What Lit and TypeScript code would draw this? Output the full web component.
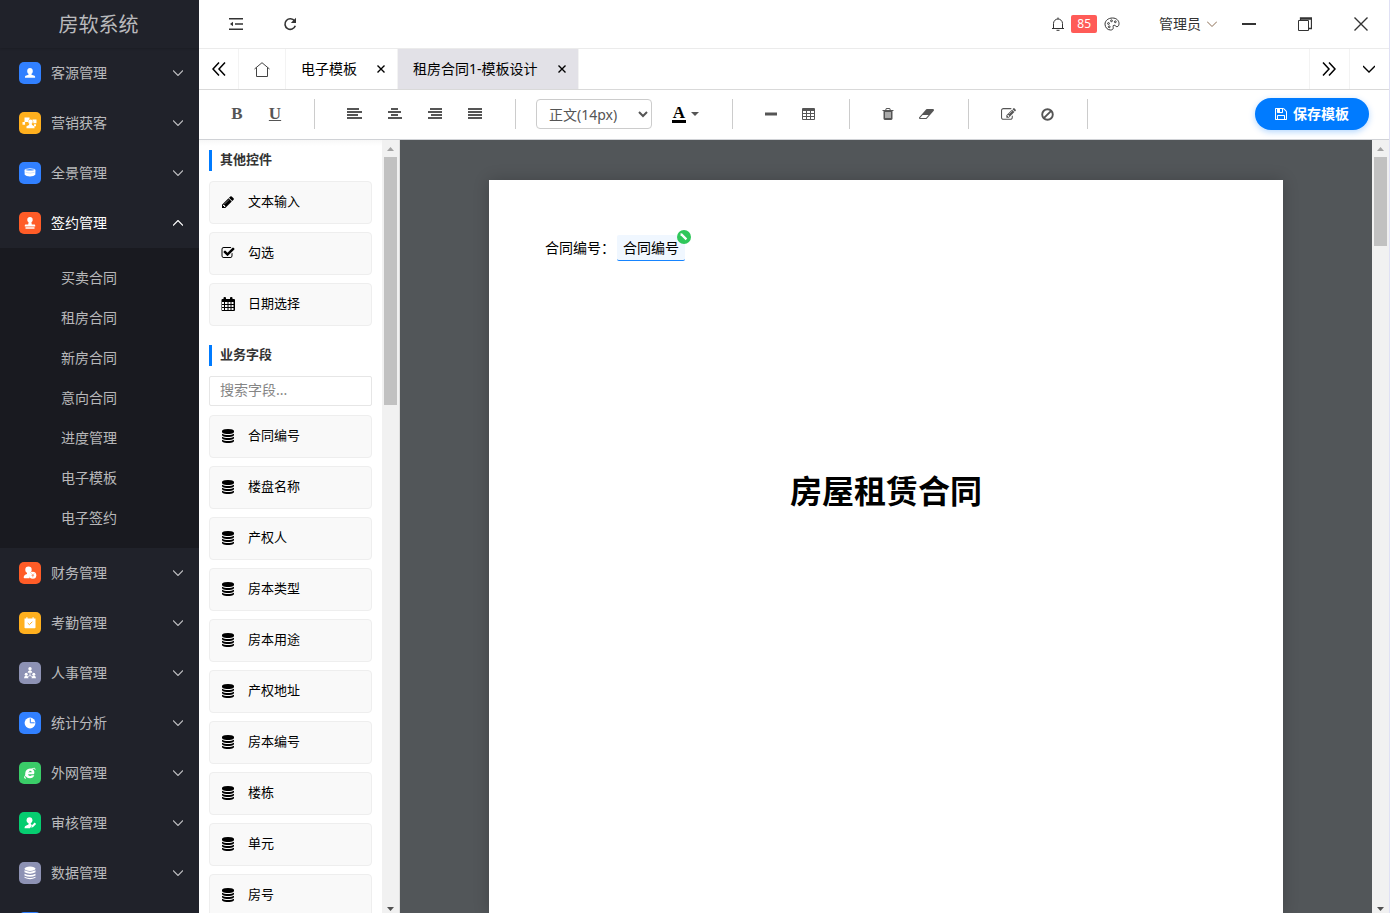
import { LitElement, html, css, svg, nothing } from "lit";
import { customElement, property, state } from "lit/decorators.js";
import { classMap } from "lit/directives/class-map.js";

const FA: Record<string, string> = {
  trash:
    "M704 1376v-704q0-14-9-23t-23-9h-64q-14 0-23 9t-9 23v704q0 14 9 23t23 9h64q14 0 23-9t9-23zm256 0v-704q0-14-9-23t-23-9h-64q-14 0-23 9t-9 23v704q0 14 9 23t23 9h64q14 0 23-9t9-23zm256 0v-704q0-14-9-23t-23-9h-64q-14 0-23 9t-9 23v704q0 14 9 23t23 9h64q14 0 23-9t9-23zm-544-992h448l-48-117q-7-9-17-11h-317q-10 2-17 11zm928 32v64q0 14-9 23t-23 9h-96v948q0 83-47 143.5t-113 60.5h-832q-66 0-113-58.5t-47-141.5v-952h-96q-14 0-23-9t-9-23v-64q0-14 9-23t23-9h309l70-167q15-37 54-63t79-26h320q40 0 79 26t54 63l70 167h309q14 0 23 9t9 23z",
  pencil:
    "M491 1536l91-91-235-235-91 91v107h128v128h107zm523-928q0-22-22-22-10 0-17 7l-542 542q-7 7-7 17 0 22 22 22 10 0 17-7l542-542q7-7 7-17zm-54-192l416 416-832 832h-416v-416zm683 96q0 53-37 90l-166 166-416-416 166-165q36-38 90-38 53 0 91 38l235 234q37 39 37 91z",
  check:
    "M1472 930v318q0 119-84.5 203.5t-203.5 84.5h-832q-119 0-203.5-84.5t-84.5-203.5v-832q0-119 84.5-203.5t203.5-84.5h832q63 0 117 25 15 7 18 23 3 17-9 29l-49 49q-10 10-23 10-3 0-9-2-23-6-45-6h-832q-66 0-113 47t-47 113v832q0 66 47 113t113 47h832q66 0 113-47t47-113v-254q0-13 9-22l64-64q10-10 23-10 6 0 12 3 20 8 20 29zm231-489l-814 814q-24 24-57 24t-57-24l-430-430q-24-24-24-57t24-57l110-110q24-24 57-24t57 24l263 263 647-647q24-24 57-24t57 24l110 110q24 24 24 57t-24 57z",
  edit:
    "M888 1184l116-116-152-152-116 116v56h96v96h56zm440-720q-16-16-33 1l-350 350q-17 17-1 33t33-1l350-350q17-17 1-33zm80 594v190q0 119-84.5 203.5t-203.5 84.5h-832q-119 0-203.5-84.5t-84.5-203.5v-832q0-119 84.5-203.5t203.5-84.5h832q63 0 117 25 15 7 18 23 3 17-9 29l-49 49q-14 14-32 8-23-6-45-6h-832q-66 0-113 47t-47 113v832q0 66 47 113t113 47h832q66 0 113-47t47-113v-126q0-13 9-22l64-64q15-15 35-7t20 29zm-96-738l288 288-672 672h-288v-288zm444 132l-92 92-288-288 92-92q28-28 68-28t68 28l152 152q28 28 28 68t-28 68z",
  save:
    "M512 1536h768v-384h-768v384zm896 0h128v-896q0-14-10-38.5t-20-34.5l-281-281q-10-10-34-20t-39-10v416q0 40-28 68t-68 28h-576q-40 0-68-28t-28-68v-416h-128v1280h128v-416q0-40 28-68t68-28h832q40 0 68 28t28 68v416zm-384-928v-320q0-13-9.5-22.5t-22.5-9.5h-192q-13 0-22.5 9.5t-9.5 22.5v320q0 13 9.5 22.5t22.5 9.5h192q13 0 22.5-9.5t9.5-22.5zm640 32v928q0 40-28 68t-68 28h-1344q-40 0-68-28t-28-68v-1344q0-40 28-68t68-28h928q40 0 88 20t76 48l280 280q28 28 48 76t20 88z",
  database:
    "M896 768q237 0 443-43t325-127v170q0 69-103 128t-280 93.5-385 34.5-385-34.5-280-93.5-103-128v-170q119 84 325 127t443 43zm0 768q237 0 443-43t325-127v170q0 69-103 128t-280 93.5-385 34.5-385-34.5-280-93.5-103-128v-170q119 84 325 127t443 43zm0-384q237 0 443-43t325-127v170q0 69-103 128t-280 93.5-385 34.5-385-34.5-280-93.5-103-128v-170q119 84 325 127t443 43zm0-1152q208 0 385 34.5t280 93.5 103 128v128q0 69-103 128t-280 93.5-385 34.5-385-34.5-280-93.5-103-128v-128q0-69 103-128t280-93.5 385-34.5z",
};

const fa = (name: string, size = 14) =>
  html`<svg width=${size} height=${size} viewBox="0 0 1792 1792" fill="currentColor" aria-hidden="true"><path d=${FA[name]} /></svg>`;

const line = (w: number, h: number, d: string, sw = 1) =>
  html`<svg width=${w} height=${h} viewBox="0 0 ${w} ${h}" fill="none" stroke="currentColor" stroke-width=${sw} aria-hidden="true"><path d=${d} /></svg>`;

const bars = (rows: number[][]) =>
  html`<svg width="16" height="12" viewBox="0 0 16 12" fill="currentColor" aria-hidden="true">
    ${rows.map(([x, w], i) => svg`<rect x=${x} y=${i * 3} width=${w} height="2" />`)}
  </svg>`;

const tableIcon = html`<svg width="16" height="14" viewBox="0 0 16 14" aria-hidden="true">
  <path fill="currentColor" fill-rule="evenodd" d="M2 1h11q1 0 1 1v10q0 1-1 1h-11q-1 0-1-1v-10q0-1 1-1zM2 4v2h3v-2zM6 4v2h3v-2zM10 4v2h3v-2zM2 7v2h3v-2zM6 7v2h3v-2zM10 7v2h3v-2zM2 10v2h3v-2zM6 10v2h3v-2zM10 10v2h3v-2z" />
</svg>`;

const calendarIcon = html`<svg width="14" height="14" viewBox="0 0 14 14" aria-hidden="true">
  <path fill="currentColor" fill-rule="evenodd" d="M1 2h1.500v-1q0-1 1-1h.5q1 0 1 1v1h4v-1q0-1 1-1h.5q1 0 1 1v1h1.500q1 0 1 1v10q0 1-1 1h-11.500q-1 0-1-1v-10q0-1 1-1zM1 5v2h2v-2zM4 5v2h2.500v-2zM7.500 5v2h2v-2zM10.500 5v2h2v-2zM1 8v2h2v-2zM4 8v2h2.500v-2zM7.500 8v2h2v-2zM10.500 8v2h2v-2zM1 11v2h2v-2zM4 11v2h2.500v-2zM7.500 11v2h2v-2zM10.500 11v2h2v-2z" />
</svg>`;

const toolIcon = (kind: string) => {
  switch (kind) {
    case "text":
      return fa("pencil");
    case "check":
      return fa("check");
    case "date":
      return calendarIcon;
    default:
      return fa("database");
  }
};

const badgeShapes: Record<string, unknown> = {
  user: svg`<path d="M11 6c1.700 0 2.800 1.200 2.800 2.900 0 1.300-.5 2.300-1.300 2.900v.9l3 1c.4.200.6.600.6 1v1H6v-1c0-.4.2-.8.600-1l2.900-1v-.9C8.700 11.200 8.200 10.200 8.200 8.900c0-1.700 1.100-2.900 2.800-2.900z" />`,
  market: svg`<path d="M5.500 5.500h5v1.800q-1.500.7-1.400 2.700H5.500zM13.500 7.500h4v3.800h-3.200q.5-2-.8-3zM3.500 10h2.600v2.800H3.500zM15 12.300h2v2h-2z" /><circle cx="11.500" cy="9.800" r="2.300" /><path d="M10.300 11.500h2.400l.3 1.500 2.500 1.300v2h-8v-2l2.500-1.300z" />`,
  pano: svg`<path d="M5.500 7.500q1 1 5.500 1t5.500-1l-.2 5.300q-1.300 1.700-5.300 1.700t-5.300-1.700z" /><path d="M6 7.500q5-1.800 10 0" stroke="#fff" stroke-width=".8" fill="none" /><path d="M6.500 10.300q4.500 1.600 9 0" stroke="#9cc2ff" stroke-width=".5" fill="none" />`,
  stamp: svg`<circle cx="11" cy="7.800" r="2.700" /><path d="M9.800 9h2.400l.6 3.500h2.700q.7 0 .7.700v1.300H5.800v-1.300q0-.7.700-.7h2.700zM6.500 15.300h9v1.500h-9z" />`,
  finance: svg`<circle cx="9.500" cy="7.700" r="3.200" /><path d="M8 10h3l.5 1.500-1 4.800H5.500q-.8 0-.8-.8c0-2 1.300-2.900 3.300-3.500z" /><circle cx="13.800" cy="13.200" r="3.500" /><path d="M12.500 11.500l1.300 1.500 1.300-1.500M13.800 13v2.300M12.500 13.500h2.600" stroke="#ff8a65" stroke-width=".7" fill="none" />`,
  clock: svg`<path d="M5.500 6.500h11v9q0 .8-.8.800H6.300q-.8 0-.8-.8zM7.300 5.200h1.200v2H7.300zM13.500 5.200h1.200v2h-1.200z" /><path d="M8.700 11l1.700 1.700 3-3" stroke="#ffb01e" stroke-width="1" fill="none" />`,
  team: svg`<circle cx="11" cy="6.800" r="1.700" /><path d="M8.600 10.800q.2-2.500 2.400-2.500t2.400 2.500z" /><circle cx="7.200" cy="12.300" r="1.500" /><path d="M5 16.200q.2-2.600 2.200-2.600t2.300 2.600z" /><circle cx="14.800" cy="12.300" r="1.500" /><path d="M12.500 16.200q.2-2.600 2.300-2.600t2.200 2.600z" /><path d="M11 10.500v3l-2 1M11 13.500l2 1" stroke="#fff" stroke-width=".8" fill="none" />`,
  chart: svg`<circle cx="11" cy="11" r="5.400" /><path d="M11.300 6.500v4.300h4.300" stroke="#2f80ff" stroke-width="1" fill="none" />`,
  web: svg`<path d="M14.800 12.300H9q.3 1.800 2 1.800 1.200 0 1.800-.8h2.500q-1 2.900-4.400 2.900-4.600 0-4.700-4.700Q6.500 7 11 6.600q4.500.1 4.400 4.500zM9.100 10.200h3.700q-.2-1.600-1.800-1.600t-1.900 1.600z" /><path d="M7 16.200q-2 .5-1.300-1.500 1.500-4.500 7-7.600 3.800-1.800 3.400.6" stroke="#fff" stroke-width="1" fill="none" />`,
  audit: svg`<circle cx="10.500" cy="8.200" r="2.900" /><path d="M9.500 10h2l.5 2.200 1 .8-2 3.300H5.600v-.9q0-1.500 1.700-2l2.200-1z" /><path d="M12.300 15.800l.4-2.200 3-3 1.400 1.400-3 3z" />`,
  data: svg`<ellipse cx="11" cy="6.700" rx="5.500" ry="2.200" /><path d="M5.500 8.300q5.500 2.800 11 0v2q-5.500 2.800-11 0zM5.500 11.700q5.500 2.600 11 0v1.700q-5.500 2.800-11 0zM5.500 14.800q5.500 2.600 11 0v1q-5.500 2.700-11 0z" />`,
};

interface Menu {
  name: string;
  icon: string;
  color: string;
  children?: string[];
}

const MENUS: Menu[] = [
  { name: "客源管理", icon: "user", color: "blue" },
  { name: "营销获客", icon: "market", color: "amber" },
  { name: "全景管理", icon: "pano", color: "blue" },
  {
    name: "签约管理",
    icon: "stamp",
    color: "orange",
    children: ["买卖合同", "租房合同", "新房合同", "意向合同", "进度管理", "电子模板", "电子签约"],
  },
  { name: "财务管理", icon: "finance", color: "orange" },
  { name: "考勤管理", icon: "clock", color: "amber" },
  { name: "人事管理", icon: "team", color: "slate" },
  { name: "统计分析", icon: "chart", color: "blue" },
  { name: "外网管理", icon: "web", color: "green" },
  { name: "审核管理", icon: "audit", color: "emerald" },
  { name: "数据管理", icon: "data", color: "slate" },
  { name: "", icon: "user", color: "blue" },
];

const base = css`
  * {
    box-sizing: border-box;
  }
  button {
    font: inherit;
    color: inherit;
    background: none;
    border: 0;
    padding: 0;
    cursor: pointer;
  }
  a {
    color: inherit;
    text-decoration: none;
  }
  svg {
    display: block;
    flex: none;
  }
`;

@customElement("side-menu")
export class SideMenu extends LitElement {
  @state() private open: string | null = "签约管理";

  static styles = [
    base,
    css`
      :host {
        display: flex;
        flex-direction: column;
        width: 199px;
        flex: none;
        overflow: hidden;
        background: #20222a;
        color: rgba(255, 255, 255, 0.7);
      }
      .logo {
        flex: none;
        height: 48px;
        line-height: 50px;
        padding-right: 2px;
        text-align: center;
        font-size: 20px;
        box-shadow: 0 1px 2px rgba(0, 0, 0, 0.15);
      }
      nav {
        flex: none;
      }
      .item {
        display: flex;
        align-items: center;
        width: 100%;
        height: 50px;
        padding: 0 16px 0 19px;
        gap: 10px;
        text-align: left;
      }
      .item span {
        flex: 1;
      }
      .item.open {
        color: #fff;
      }
      .badge {
        border-radius: 5px;
      }
      .blue {
        background: #3180ff;
      }
      .amber {
        background: #ffb01e;
      }
      .orange {
        background: #ff5c27;
      }
      .slate {
        background: #8d92b4;
      }
      .green {
        background: #3acd68;
      }
      .emerald {
        background: #06cd70;
      }
      .sub {
        padding: 10px 0;
        background: #191a20;
      }
      .sub a {
        display: block;
        height: 40px;
        line-height: 40px;
        padding-left: 61px;
      }
    `,
  ];

  render() {
    return html`
      <div class="logo">房软系统</div>
      <nav>
        ${MENUS.map((m) => {
          const open = m.name === this.open;
          return html`
            <button
              class=${classMap({ item: true, open })}
              aria-expanded=${open}
              @click=${() => (this.open = open ? null : m.name)}
            >
              <svg class="badge ${m.color}" width="22" height="22" viewBox="0 0 22 22" fill="#fff" aria-hidden="true">
                ${badgeShapes[m.icon]}
              </svg>
              <span>${m.name}</span>
              ${line(10, 6, open ? "M0 5.500l5-5 5 5" : "M0 .5l5 5 5-5", 1.2)}
            </button>
            ${open && m.children
              ? html`<div class="sub">${m.children.map((c) => html`<a href="#">${c}</a>`)}</div>`
              : nothing}
          `;
        })}
      </nav>
    `;
  }
}

@customElement("scroll-rail")
export class ScrollRail extends LitElement {
  @property({ type: Number }) thumb = 100;

  static styles = css`
    :host {
      display: flex;
      flex-direction: column;
      flex: none;
      width: 17px;
      height: 100%;
      box-sizing: border-box;
      padding: 0 2px;
      background: #f1f1f1;
    }
    svg {
      display: block;
      flex: none;
      fill: #505050;
    }
    .up {
      fill: #a3a3a3;
    }
    .track {
      flex: 1;
    }
    .thumb {
      background: #c1c1c1;
    }
  `;

  render() {
    return html`
      <svg class="up" width="13" height="17" viewBox="0 0 13 17" aria-hidden="true"><path d="M3 11l3.500-4 3.500 4z" /></svg>
      <div class="track"><div class="thumb" style="height:${this.thumb}px"></div></div>
      <svg width="13" height="9" viewBox="0 0 13 9" aria-hidden="true"><path d="M3 3h7l-3.500 4z" /></svg>
    `;
  }
}

@customElement("tool-card")
export class ToolCard extends LitElement {
  @property() kind = "field";
  @property() label = "";

  static styles = [
    base,
    css`
      :host {
        display: block;
      }
      button {
        display: flex;
        align-items: center;
        gap: 13px;
        width: 100%;
        padding: 9px 11px 11px;
        border: 1px solid #eee;
        border-radius: 4px;
        background: #f9f9f9;
        color: #000;
        font-size: 13px;
        line-height: 21px;
      }
    `,
  ];

  render() {
    return html`<button>${toolIcon(this.kind)}<span>${this.label}</span></button>`;
  }
}

@customElement("app-root")
export class AppRoot extends LitElement {
  @state() private query = "";

  private fields = ["合同编号", "楼盘名称", "产权人", "房本类型", "房本用途", "产权地址", "房本编号", "楼栋", "单元", "房号"];

  static styles = [
    base,
    css`
      :host {
        display: flex;
        height: 100vh;
        overflow: hidden;
        background: #fff;
        color: #333;
        font: 14px/20px "Noto Sans", "Noto Sans CJK SC", sans-serif;
      }
      .shell {
        flex: 1;
        min-width: 0;
        display: flex;
        flex-direction: column;
        border-right: 1px solid #dfe0f5;
      }
      .header {
        flex: none;
        display: flex;
        align-items: center;
        justify-content: space-between;
        height: 49px;
        padding-left: 10px;
        border-bottom: 1px solid #ebebeb;
      }
      .header div {
        display: flex;
        align-items: center;
      }
      .icon-btn {
        display: flex;
        align-items: center;
        justify-content: center;
        width: 54px;
        height: 48px;
      }
      .win {
        width: 56px;
      }
      .notice {
        gap: 6px;
      }
      .count {
        padding: 0 6px;
        margin-right: 1px;
        border-radius: 2px;
        background: #ff5b57;
        color: #fff;
        font-size: 12px;
        line-height: 18px;
      }
      .account {
        display: flex;
        align-items: center;
        gap: 6px;
        padding: 0 4px 0 39px;
      }
      .account svg {
        color: #8a6d52;
      }
      .tabs {
        flex: none;
        display: flex;
        height: 41px;
        border-bottom: 1px solid #d9d9d9;
        color: #000;
      }
      .nav-btn {
        display: flex;
        align-items: center;
        justify-content: center;
        width: 40px;
        border-right: 1px solid #f3f3f3;
      }
      .home {
        width: 47px;
        color: #444;
      }
      .nav-btn.right {
        padding-right: 2px;
        border-right: 0;
        border-left: 1px solid #f3f3f3;
      }
      .tab {
        display: flex;
        align-items: center;
        gap: 16px;
        padding: 0 8px 0 15px;
        border-right: 1px solid #f3f3f3;
        white-space: nowrap;
      }
      .tab.active {
        background: #e2e1e7;
      }
      .tab button {
        display: flex;
        align-items: center;
        justify-content: center;
        width: 16px;
        height: 16px;
      }
      .spacer {
        flex: 1;
      }
      .toolbar {
        flex: none;
        display: flex;
        align-items: center;
        height: 50px;
        padding: 0 20px 1px 0;
        border-bottom: 1px solid #d0d2d6;
        color: #555;
      }
      .group {
        display: flex;
        align-items: center;
        height: 30px;
        padding: 0 20px;
        border-right: 1px solid #ccc;
      }
      .group.first {
        padding-left: 19px;
      }
      .tool {
        display: flex;
        align-items: center;
        justify-content: center;
        height: 30px;
        padding: 0 12px;
      }
      .serif {
        width: 38px;
        padding: 0;
        font: bold 17px/20px "Liberation Serif", serif;
      }
      .under {
        text-decoration: underline;
      }
      select {
        width: 116px;
        height: 30px;
        padding: 0 8px;
        border: 1px solid #ccc;
        border-radius: 4px;
        background: #fff;
        color: #555;
        font: inherit;
      }
      .color {
        gap: 5px;
        padding: 0 13px 0 20px;
        color: #000;
      }
      .letter {
        width: 14px;
        border-bottom: 3px solid #000;
        font: bold 17px/14px "Liberation Serif", serif;
      }
      .caret {
        color: #555;
      }
      .save {
        display: flex;
        align-items: center;
        gap: 5px;
        height: 32px;
        padding: 0 20px 0 19px;
        border-radius: 16px;
        background: #007bff;
        box-shadow: 0 2px 6px rgba(0, 123, 255, 0.3);
        color: #fff;
        font-weight: 700;
      }
      .work {
        flex: 1;
        min-height: 0;
        display: flex;
      }
      .panel {
        flex: none;
        display: flex;
        width: 201px;
        border-right: 1px solid #ddd;
        background: linear-gradient(#f7f7f7, #fff 6px);
      }
      .list {
        flex: 1;
        overflow: hidden;
        display: flex;
        flex-direction: column;
        gap: 8px;
        padding: 10px 10px 0;
      }
      .list > * {
        flex: none;
      }
      h3 {
        margin: 0 0 2px;
        padding: 0 0 3px 8px;
        border-left: 3px solid #007bff;
        font-size: 13px;
        line-height: 18px;
        font-weight: 700;
        color: #333;
      }
      h3.second {
        margin-top: 11px;
      }
      .search {
        height: 30px;
        width: 100%;
        margin-bottom: 1px;
        padding: 0 10px 3px;
        border: 1px solid #e6e6e6;
        border-radius: 2px;
        font: inherit;
        color: #333;
      }
      .search::placeholder {
        color: #858585;
      }
      .stage {
        flex: 1;
        min-width: 0;
        display: flex;
        background: #525659;
      }
      .canvas {
        flex: 1;
        min-width: 0;
        overflow: hidden;
        display: flex;
        justify-content: center;
        padding-top: 40px;
      }
      .paper {
        width: 794px;
        min-height: 100%;
        padding: 55px 56px;
        background: #fff;
        color: #000;
        box-shadow: 0 0 15px rgba(0, 0, 0, 0.2);
      }
      .row {
        display: flex;
        align-items: center;
        gap: 2px;
      }
      .field {
        position: relative;
        padding: 3px 6px 2px;
        border-bottom: 1px solid #1684ff;
        border-radius: 2px;
        background: #f0f7ff;
        line-height: 20px;
      }
      .mark {
        position: absolute;
        top: -5px;
        right: -6px;
      }
      h1 {
        margin: 206px 0 0;
        text-align: center;
        font-size: 32px;
        line-height: 48px;
        font-weight: 700;
      }
    `,
  ];

  private tool(label: string, icon: unknown) {
    return html`<button class="tool" aria-label=${label}>${icon}</button>`;
  }

  render() {
    return html`
      <side-menu></side-menu>
      <div class="shell">
        <header class="header">
          <div>
            <button class="icon-btn" aria-label="收起菜单">
              <svg width="14" height="12" viewBox="0 0 14 12" fill="none" stroke="currentColor" stroke-width="1.500" aria-hidden="true">
                <path d="M0 .8h14M6 6h8M0 11.200h14" /><path d="M4 3.800v4.400L1 6z" fill="currentColor" stroke="none" />
              </svg>
            </button>
            <button class="icon-btn" aria-label="刷新">
              <svg width="14" height="14" viewBox="0 0 14 14" fill="none" stroke="currentColor" stroke-width="1.600" aria-hidden="true">
                <path d="M11.600 4A5.300 5.300 0 1 0 12.300 8.800" /><path d="M13 .8v5.200H7.800z" fill="currentColor" stroke="none" />
              </svg>
            </button>
          </div>
          <div>
            <div class="notice">
              <svg width="14" height="14" viewBox="0 0 14 14" fill="none" stroke="currentColor" aria-hidden="true">
                <path d="M1 11.500h12M2.500 11.500V6.500a4.500 4.500 0 0 1 9 0v5M7 2V.5M5.500 13.300h3" />
              </svg>
              <span class="count">85</span>
              <svg width="16" height="14" viewBox="0 0 16 14" fill="none" stroke="currentColor" aria-hidden="true">
                <path d="M8.500 1C12.500 1 15 3.600 15 6.500c0 1.500-.6 3.200-2 3.200s-1.500-1.700-3-1.500c-1.600.3-.5 1.900-.8 3.200C8.900 12.500 8 13 6.500 13 3.500 13 1 10.400 1 7.200 1 3.600 4.300 1 8.500 1z" />
                <circle cx="4.500" cy="6.500" r=".9" /><circle cx="7.500" cy="3.800" r=".9" /><circle cx="11.300" cy="4.800" r=".9" /><circle cx="5.200" cy="9.800" r=".9" />
              </svg>
            </div>
            <button class="account">管理员 ${line(10, 6, "M0 .5l5 5 5-5")}</button>
            <button class="icon-btn win" aria-label="最小化">${line(14, 14, "M0 7h14", 2)}</button>
            <button class="icon-btn win" aria-label="还原">
              <svg width="14" height="14" viewBox="0 0 14 14" fill="none" stroke="currentColor" aria-hidden="true">
                <path d="M.5 3.500h10v10h-10z" /><path d="M2.500 3V1h11v10.500h-2.500M3 2h10" stroke-width="1.300" />
              </svg>
            </button>
            <button class="icon-btn win" aria-label="关闭">${line(14, 14, "M.5 .5l13 13M13.500 .5l-13 13", 1.4)}</button>
          </div>
        </header>

        <div class="tabs">
          <button class="nav-btn" aria-label="向左">${line(14, 14, "M7 .5L1 7l6 6.500M13 .5L7 7l6 6.500", 1.5)}</button>
          <button class="nav-btn home" aria-label="首页">
            ${line(16, 15, "M.5 7L8 .7 15.500 7M2.500 5.500v9h11v-9")}
          </button>
          <div class="tab">电子模板<button aria-label="关闭">${line(8, 8, "M.5 .5l7 7M7.500 .5l-7 7", 1.4)}</button></div>
          <div class="tab active">
            租房合同1-模板设计<button aria-label="关闭">${line(8, 8, "M.5 .5l7 7M7.500 .5l-7 7", 1.4)}</button>
          </div>
          <div class="spacer"></div>
          <button class="nav-btn right" aria-label="向右">${line(14, 14, "M1 .5L7 7l-6 6.500M7 .5L13 7l-6 6.500", 1.5)}</button>
          <button class="nav-btn right" aria-label="更多">${line(12, 8, "M0 1l6 6 6-6", 1.3)}</button>
        </div>

        <div class="toolbar">
          <div class="group first">
            <button class="tool serif">B</button>
            <button class="tool serif under">U</button>
          </div>
          <div class="group">
            ${this.tool("左对齐", bars([[0, 12], [0, 15], [0, 11], [0, 15]]))}
            ${this.tool("居中", bars([[4, 7], [1, 13], [4, 7], [1, 14]]))}
            ${this.tool("右对齐", bars([[3, 12], [1, 14], [4, 11], [1, 14]]))}
            ${this.tool("两端对齐", bars([[1, 14], [1, 14], [1, 14], [1, 14]]))}
          </div>
          <div class="group">
            <select aria-label="字号">
              <option>正文(14px)</option>
              <option>标题(32px)</option>
            </select>
            <button class="tool color" aria-label="文字颜色">
              <span class="letter">A</span>
              <svg class="caret" width="8" height="4" viewBox="0 0 8 4" fill="currentColor" aria-hidden="true"><path d="M0 0h8l-4 4z" /></svg>
            </button>
          </div>
          <div class="group">
            ${this.tool("分割线", line(12, 14, "M0 7h12", 3))}
            ${this.tool("表格", tableIcon)}
          </div>
          <div class="group">
            ${this.tool(
              "删除",
              html`<svg width="12" height="14" viewBox="128 0 1536 1792" fill="currentColor" aria-hidden="true"><path d=${FA.trash} /></svg>`,
            )}
            ${this.tool(
              "清除格式",
              html`<svg width="18" height="14" viewBox="0 0 1920 1792" fill="currentColor" aria-hidden="true">
                <path d="M832 1408l336-384h-768l-336 384h768zm1013-1077q15 34 9.500 71.500t-30.500 65.500l-896 1024q-38 44-96 44h-768q-38 0-69.500-20.500t-47.500-54.500q-15-34-9.500-71.500t30.500-65.500l896-1024q38-44 96-44h768q38 0 69.500 20.500t47.500 54.500z" />
              </svg>`,
            )}
          </div>
          <div class="group">
            ${this.tool("编辑", fa("edit", 15))}
            ${this.tool(
              "禁用",
              html`<svg width="15" height="15" viewBox="0 0 15 15" fill="none" stroke="currentColor" stroke-width="1.900" aria-hidden="true">
                <circle cx="7.500" cy="7.500" r="5.300" /><path d="M3.800 11.200l7.400-7.400" />
              </svg>`,
            )}
          </div>
          <div class="spacer"></div>
          <button class="save">${fa("save")}保存模板</button>
        </div>

        <div class="work">
          <aside class="panel">
            <div class="list">
              <h3>其他控件</h3>
              <tool-card kind="text" label="文本输入"></tool-card>
              <tool-card kind="check" label="勾选"></tool-card>
              <tool-card kind="date" label="日期选择"></tool-card>
              <h3 class="second">业务字段</h3>
              <input
                class="search"
                aria-label="搜索字段"
                placeholder="搜索字段..."
                .value=${this.query}
                @input=${(e: Event) => (this.query = (e.target as HTMLInputElement).value)}
              />
              ${this.fields
                .filter((f) => f.includes(this.query))
                .map((f) => html`<tool-card label=${f}></tool-card>`)}
            </div>
            <scroll-rail .thumb=${248}></scroll-rail>
          </aside>
          <main class="stage">
            <div class="canvas">
              <article class="paper">
                <div class="row">
                  <span>合同编号：</span>
                  <span class="field">
                    合同编号
                    <svg class="mark" width="14" height="14" viewBox="0 0 14 14" aria-hidden="true">
                      <circle cx="7" cy="7" r="7" fill="#2fc75a" />
                      <path d="M3.500 3.300l1.700.3 5 5-1.600 1.600-5-5z" fill="#fff" />
                    </svg>
                  </span>
                </div>
                <h1>房屋租赁合同</h1>
              </article>
            </div>
            <scroll-rail .thumb=${89}></scroll-rail>
          </main>
        </div>
      </div>
    `;
  }
}
